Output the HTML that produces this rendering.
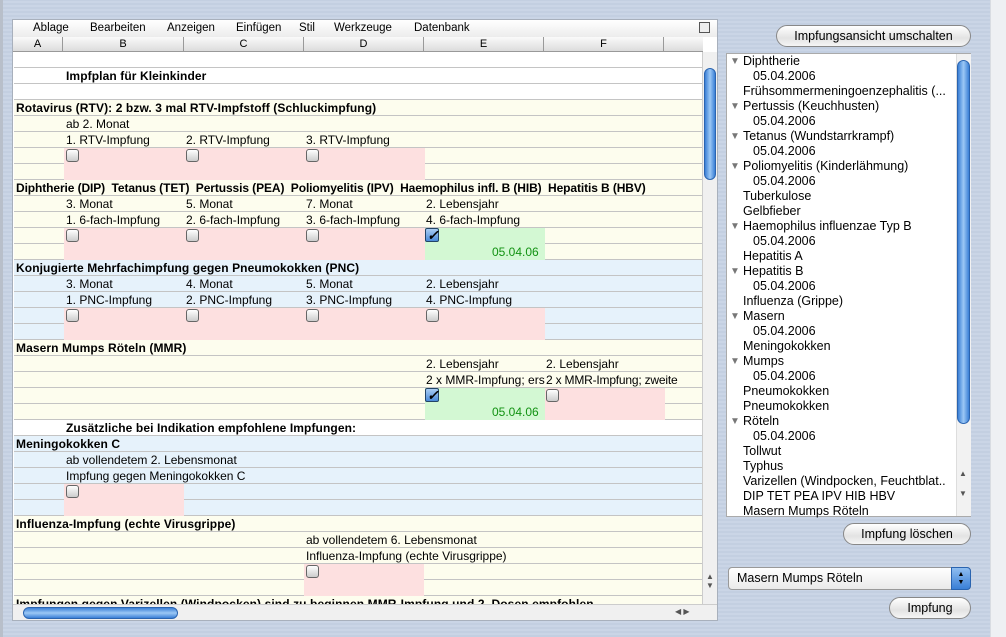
<!DOCTYPE html>
<html><head><meta charset="utf-8"><style>
*{margin:0;padding:0;box-sizing:border-box}
body{width:1006px;height:637px;overflow:hidden;position:relative;background:#c5d1e3;font-family:"Liberation Sans",sans-serif;font-size:11px;color:#000;
background-image:repeating-linear-gradient(0deg,#c3cfe1 0,#c3cfe1 2px,#cad5e6 2px,#cad5e6 4px)}
.strip{position:absolute;left:990px;top:0;width:16px;height:637px;background:#eef0f3;border-left:1px solid #d8dce2}
.lstrip{position:absolute;left:0;top:0;width:3px;height:637px;background:#b8bfca}
.win{position:absolute;left:12px;top:19px;width:706px;height:602px;background:#fff;border:1px solid #a8b0bc}
.menu{position:absolute;left:0;top:0;width:704px;height:17px;background:linear-gradient(#fff,#ececec);font-size:11.5px}
.menu span{position:absolute;top:2px}
.colh{position:absolute;left:0;top:17px;width:690px;height:15px;background:linear-gradient(#fafafa,#dcdcdc);border-bottom:1px solid #999}
.colh div{position:absolute;top:0;height:15px;border-right:1px solid #999;text-align:center;font-size:11px;line-height:14px}
.grid{position:absolute;left:1px;top:32px;width:688px;height:552px;overflow:hidden;font-size:12px}
.r{position:absolute;left:0;width:688px;height:16px;border-bottom:1px solid #c4c4c4}
.r span{position:absolute;top:1px;white-space:nowrap}
.b{font-weight:bold;letter-spacing:0.1px}
.y{background:#fdfdee}.w{background:#fff}.bl{background:#e6f2fb}
.pk{position:absolute;top:0;height:16px;background:#fde0e0}
.gr{position:absolute;top:0;height:16px;background:#d3f8d3}
.cb{position:absolute;top:1px;width:13px;height:13px;border:1px solid #666;border-radius:3px;background:linear-gradient(#fff,#ccc)}
.cc{position:absolute;top:0px;width:14px;height:14px;border:1px solid #246;border-radius:2px;background:linear-gradient(#a9cdf3,#4a8ad8);font-size:14px;line-height:12px;color:#000;font-weight:bold;text-indent:1px}
.dt{color:#129212}
.vs{position:absolute;left:689px;top:32px;width:15px;height:552px;background:#f0f0f0;border-left:1px solid #ccc}
.thumb{position:absolute;border-radius:8px;background:linear-gradient(90deg,#3a7fd6,#9cc8f5,#3a7fd6);border:1px solid #2a64b0}
.hs{position:absolute;left:0;top:584px;width:704px;height:16px;background:#f0f0f0;border-top:1px solid #ccc}
.btn{position:absolute;height:22px;border:1px solid #888;border-radius:11px;background:linear-gradient(#fff,#e3e3e3 60%,#f5f5f5);text-align:center;font-size:12.5px;line-height:20px}
.list{position:absolute;left:726px;top:53px;width:245px;height:464px;background:#fff;border:1px solid #aaa;font-size:12.5px}
.list div{position:absolute;white-space:nowrap;height:15px;line-height:15px}
.list .tri{left:3px;color:#777;font-size:10px}
</style></head><body>
<div class="lstrip"></div><div class="strip"></div>
<div class="win">
<div class="menu"><span style="left:20px">Ablage</span><span style="left:77px">Bearbeiten</span><span style="left:154px">Anzeigen</span><span style="left:223px">Einfügen</span><span style="left:286px">Stil</span><span style="left:321px">Werkzeuge</span><span style="left:401px">Datenbank</span>
<span style="left:686px;top:2px;width:11px;height:11px;border:1px solid #555;background:#eee"></span></div>
<div class="colh"><div style="left:0;width:50px">A</div><div style="left:50px;width:121px">B</div><div style="left:171px;width:120px">C</div><div style="left:291px;width:120px">D</div><div style="left:411px;width:120px">E</div><div style="left:531px;width:120px">F</div><div style="left:651px;width:39px;border-right:none"></div></div>
<div class="grid">
<div class="r w" style="top:0"></div>
<div class="r w" style="top:16px"><span class="b" style="left:52px">Impfplan für Kleinkinder</span></div>
<div class="r w" style="top:32px"></div>
<div class="r y" style="top:48px"><span class="b" style="left:2px">Rotavirus (RTV): 2 bzw. 3 mal RTV-Impfstoff (Schluckimpfung)</span></div>
<div class="r y" style="top:64px"><span style="left:52px">ab 2. Monat</span></div>
<div class="r y" style="top:80px"><span style="left:52px">1. RTV-Impfung</span><span style="left:172px">2. RTV-Impfung</span><span style="left:292px">3. RTV-Impfung</span></div>
<div class="r y" style="top:96px"><i class="pk" style="left:50px;width:361px"></i><i class="cb" style="left:52px"></i><i class="cb" style="left:172px"></i><i class="cb" style="left:292px"></i></div>
<div class="r y" style="top:112px"><i class="pk" style="left:50px;width:361px"></i></div>
<div class="r y" style="top:128px"><span class="b" style="left:2px;letter-spacing:-0.1px">Diphtherie (DIP)&nbsp; Tetanus (TET)&nbsp; Pertussis (PEA)&nbsp; Poliomyelitis (IPV)&nbsp; Haemophilus infl. B (HIB)&nbsp; Hepatitis B (HBV)</span></div>
<div class="r y" style="top:144px"><span style="left:52px">3. Monat</span><span style="left:172px">5. Monat</span><span style="left:292px">7. Monat</span><span style="left:412px">2. Lebensjahr</span></div>
<div class="r y" style="top:160px"><span style="left:52px">1. 6-fach-Impfung</span><span style="left:172px">2. 6-fach-Impfung</span><span style="left:292px">3. 6-fach-Impfung</span><span style="left:412px">4. 6-fach-Impfung</span></div>
<div class="r y" style="top:176px"><i class="pk" style="left:50px;width:361px"></i><i class="gr" style="left:411px;width:120px"></i><i class="cb" style="left:52px"></i><i class="cb" style="left:172px"></i><i class="cb" style="left:292px"></i><i class="cc" style="left:411px">✓</i></div>
<div class="r y" style="top:192px"><i class="pk" style="left:50px;width:361px"></i><i class="gr" style="left:411px;width:120px"></i><span class="dt" style="left:478px">05.04.06</span></div>
<div class="r bl" style="top:208px"><span class="b" style="left:2px">Konjugierte Mehrfachimpfung gegen Pneumokokken (PNC)</span></div>
<div class="r bl" style="top:224px"><span style="left:52px">3. Monat</span><span style="left:172px">4. Monat</span><span style="left:292px">5. Monat</span><span style="left:412px">2. Lebensjahr</span></div>
<div class="r bl" style="top:240px"><span style="left:52px">1. PNC-Impfung</span><span style="left:172px">2. PNC-Impfung</span><span style="left:292px">3. PNC-Impfung</span><span style="left:412px">4. PNC-Impfung</span></div>
<div class="r bl" style="top:256px"><i class="pk" style="left:50px;width:481px"></i><i class="cb" style="left:52px"></i><i class="cb" style="left:172px"></i><i class="cb" style="left:292px"></i><i class="cb" style="left:412px"></i></div>
<div class="r bl" style="top:272px"><i class="pk" style="left:50px;width:481px"></i></div>
<div class="r y" style="top:288px"><span class="b" style="left:2px">Masern Mumps Röteln (MMR)</span></div>
<div class="r y" style="top:304px"><span style="left:412px">2. Lebensjahr</span><span style="left:532px">2. Lebensjahr</span></div>
<div class="r y" style="top:320px"><span style="left:412px;width:119px;overflow:hidden">2 x MMR-Impfung; erste</span><span style="left:532px;letter-spacing:-0.2px">2 x MMR-Impfung; zweite</span></div>
<div class="r y" style="top:336px"><i class="gr" style="left:411px;width:120px"></i><i class="pk" style="left:531px;width:120px"></i><i class="cc" style="left:411px">✓</i><i class="cb" style="left:532px"></i></div>
<div class="r y" style="top:352px"><i class="gr" style="left:411px;width:120px"></i><i class="pk" style="left:531px;width:120px"></i><span class="dt" style="left:478px">05.04.06</span></div>
<div class="r w" style="top:368px"><span class="b" style="left:52px">Zusätzliche bei Indikation empfohlene Impfungen:</span></div>
<div class="r bl" style="top:384px"><span class="b" style="left:2px">Meningokokken C</span></div>
<div class="r bl" style="top:400px"><span style="left:52px">ab vollendetem 2. Lebensmonat</span></div>
<div class="r bl" style="top:416px"><span style="left:52px">Impfung gegen Meningokokken C</span></div>
<div class="r bl" style="top:432px"><i class="pk" style="left:50px;width:120px"></i><i class="cb" style="left:52px"></i></div>
<div class="r bl" style="top:448px"><i class="pk" style="left:50px;width:120px"></i></div>
<div class="r y" style="top:464px"><span class="b" style="left:2px">Influenza-Impfung (echte Virusgrippe)</span></div>
<div class="r y" style="top:480px"><span style="left:292px">ab vollendetem 6. Lebensmonat</span></div>
<div class="r y" style="top:496px"><span style="left:292px">Influenza-Impfung (echte Virusgrippe)</span></div>
<div class="r y" style="top:512px"><i class="pk" style="left:290px;width:120px"></i><i class="cb" style="left:292px"></i></div>
<div class="r y" style="top:528px"><i class="pk" style="left:290px;width:120px"></i></div>
<div class="r y" style="top:544px"><span class="b" style="left:2px">Impfungen gegen Varizellen (Windpocken) sind zu beginnen MMR-Impfung und  2. Dosen empfohlen</span></div>
</div>
<div class="vs"><div class="thumb" style="left:1px;top:16px;width:12px;height:112px"></div><span style="position:absolute;left:3px;top:520px;font-size:8px;color:#555">▲<br>▼</span></div>
<div class="hs"><div class="thumb" style="left:10px;top:2px;width:155px;height:12px;background:linear-gradient(#3a7fd6,#9cc8f5,#3a7fd6)"></div><span style="position:absolute;left:662px;top:2px;font-size:8px;color:#555">◀ ▶</span></div>
</div>
<div class="btn" style="left:776px;top:25px;width:195px">Impfungsansicht umschalten</div>
<div class="list">
<div class="tri" style="top:0">▼</div><div style="left:16px;top:0">Diphtherie</div>
<div style="left:26px;top:15px">05.04.2006</div>
<div style="left:16px;top:30px">Frühsommermeningoenzephalitis (...</div>
<div class="tri" style="top:45px">▼</div><div style="left:16px;top:45px">Pertussis (Keuchhusten)</div>
<div style="left:26px;top:60px">05.04.2006</div>
<div class="tri" style="top:75px">▼</div><div style="left:16px;top:75px">Tetanus (Wundstarrkrampf)</div>
<div style="left:26px;top:90px">05.04.2006</div>
<div class="tri" style="top:105px">▼</div><div style="left:16px;top:105px">Poliomyelitis (Kinderlähmung)</div>
<div style="left:26px;top:120px">05.04.2006</div>
<div style="left:16px;top:135px">Tuberkulose</div>
<div style="left:16px;top:150px">Gelbfieber</div>
<div class="tri" style="top:165px">▼</div><div style="left:16px;top:165px">Haemophilus influenzae Typ B</div>
<div style="left:26px;top:180px">05.04.2006</div>
<div style="left:16px;top:195px">Hepatitis A</div>
<div class="tri" style="top:210px">▼</div><div style="left:16px;top:210px">Hepatitis B</div>
<div style="left:26px;top:225px">05.04.2006</div>
<div style="left:16px;top:240px">Influenza (Grippe)</div>
<div class="tri" style="top:255px">▼</div><div style="left:16px;top:255px">Masern</div>
<div style="left:26px;top:270px">05.04.2006</div>
<div style="left:16px;top:285px">Meningokokken</div>
<div class="tri" style="top:300px">▼</div><div style="left:16px;top:300px">Mumps</div>
<div style="left:26px;top:315px">05.04.2006</div>
<div style="left:16px;top:330px">Pneumokokken</div>
<div style="left:16px;top:345px">Pneumokokken</div>
<div class="tri" style="top:360px">▼</div><div style="left:16px;top:360px">Röteln</div>
<div style="left:26px;top:375px">05.04.2006</div>
<div style="left:16px;top:390px">Tollwut</div>
<div style="left:16px;top:405px">Typhus</div>
<div style="left:16px;top:420px">Varizellen (Windpocken, Feuchtblat..</div>
<div style="left:16px;top:435px">DIP TET PEA IPV HIB HBV</div>
<div style="left:16px;top:450px">Masern Mumps Röteln</div>
<div style="left:229px;top:0;width:15px;height:462px;background:#f2f2f2;border-left:1px solid #ddd"></div>
<div class="thumb" style="left:230px;top:6px;width:13px;height:364px"></div>
<div style="left:232px;top:410px;font-size:8px;color:#555;line-height:20px">▲<br>▼</div>
</div>
<div class="btn" style="left:843px;top:523px;width:128px">Impfung löschen</div>
<div style="position:absolute;left:728px;top:567px;width:243px;height:23px;border:1px solid #999;border-radius:4px;background:linear-gradient(#fff,#eaeaea);font-size:12.5px;line-height:21px;padding-left:8px">Masern Mumps Röteln
<div style="position:absolute;right:-1px;top:-1px;width:20px;height:23px;border-radius:0 4px 4px 0;background:linear-gradient(#8fbdf0,#3a7fd6);border:1px solid #2a64b0;color:#000;font-size:7px;line-height:8px;text-align:center;padding-top:3px">▲<br>▼</div></div>
<div class="btn" style="left:889px;top:597px;width:82px">Impfung</div>
</body></html>
